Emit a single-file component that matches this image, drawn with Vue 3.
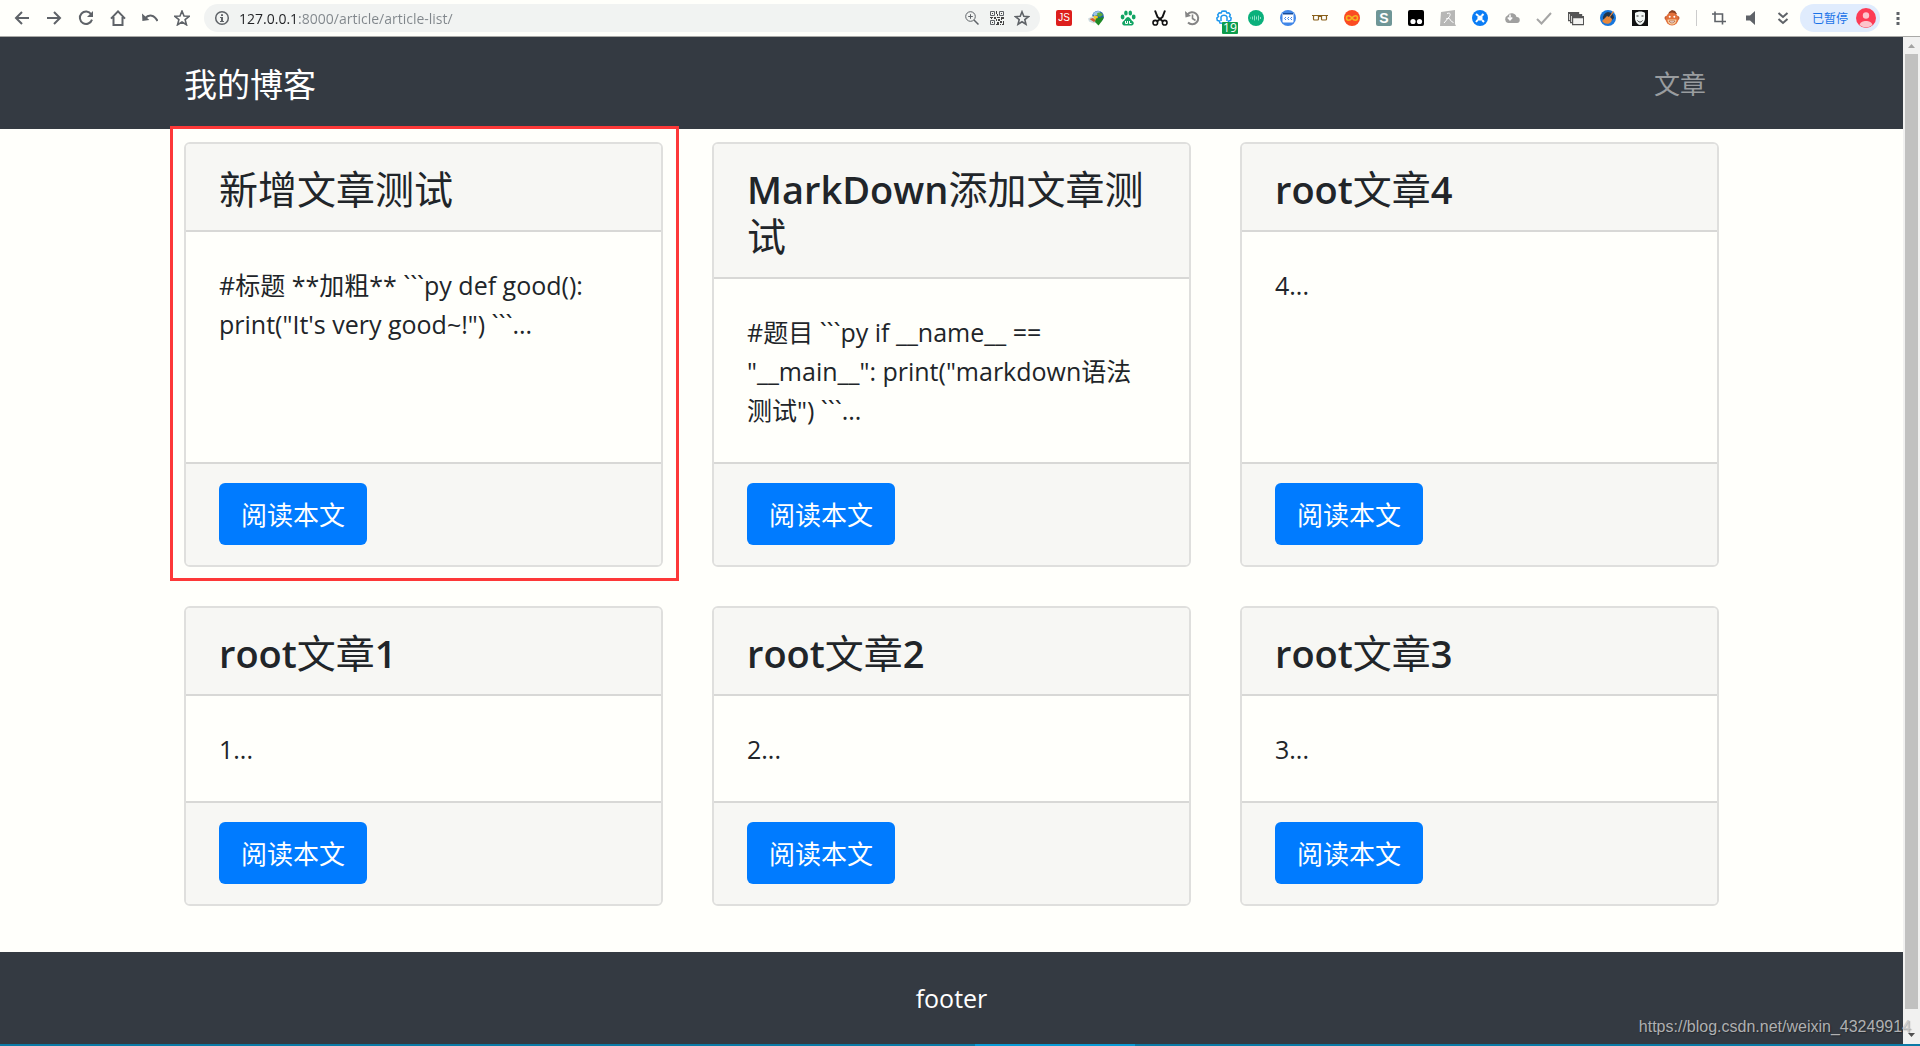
<script setup>
import { ref } from 'vue'

const url = ref('127.0.0.1:8000/article/article-list/')

// Splits a title so that its Latin and Chinese runs can carry different weights.
const runs = (text) =>
  text
    .split(/([\u4e00-\u9fff]+)/)
    .filter(Boolean)
    .map((value) => ({ value, han: /[\u4e00-\u9fff]/.test(value) }))

const articles = [
  { title: '新增文章测试', body: '#标题 **加粗** ```py def good(): print("It\'s very good~!") ```...', marked: true },
  { title: 'MarkDown添加文章测试', body: '#题目 ```py if __name__ == "__main__": print("markdown语法测试") ```...' },
  { title: 'root文章4', body: '4...' },
  { title: 'root文章1', body: '1...' },
  { title: 'root文章2', body: '2...' },
  { title: 'root文章3', body: '3...' },
]
</script>

<template>
  <div class="browser">
    <header class="toolbar">
      <div class="nav-buttons">
        <button aria-label="后退"><svg viewBox="0 0 16 16"><path class="line" d="M15 8H2M8 2L2 8l6 6" /></svg></button>
        <button aria-label="前进"><svg viewBox="0 0 16 16"><path class="line" d="M1 8h13M8 2l6 6-6 6" /></svg></button>
        <button aria-label="刷新"><svg viewBox="0 0 16 16"><path class="line" d="M13.2 4.2A6.2 6.2 0 1 0 14 9.6" /><path class="fill" d="M15 1v6H9z" /></svg></button>
        <button aria-label="主页"><svg viewBox="0 0 16 16"><path class="line" d="M1 8.6L8 1.4l7 7.2M3.5 7v8h9V7" /></svg></button>
        <button aria-label="撤销"><svg viewBox="0 0 16 16"><path class="line" d="M3 8.5C7 3.700 12.500 5 15.500 11" /><path class="fill" d="M0 3.500l.4 7.500 7-1z" /></svg></button>
        <button aria-label="收藏"><svg viewBox="0 0 16 16"><path class="star" d="M8 1l2 5 5.200.3-4.100 3.300 1.400 5.200L8 12l-4.500 2.800 1.400-5.200L.8 6.300 6 6z" /></svg></button>
      </div>

      <div class="address">
        <svg viewBox="0 0 16 16"><circle class="line" cx="8" cy="8" r="6.300" /><path class="fill" d="M7 4.300h2v1.700H7zM6 7h3v4h1v1H6v-1h1V8H6z" /></svg>
        <input v-model="url" aria-label="地址" spellcheck="false" />
        <button aria-label="缩放"><svg viewBox="0 0 16 16"><circle class="thin" cx="6.500" cy="6.500" r="4.800" /><path class="thin" d="M4.200 6.500h4.600M6.500 4.200v4.600" /><path class="line" d="M10 10l4.500 4.500" /></svg></button>
        <button aria-label="二维码">
          <svg viewBox="0 0 16 16">
            <path class="qr" d="M1.500 1.500h4v4h-4zM10.500 1.500h4v4h-4zM1.500 10.500h4v4h-4z" />
            <path class="dark" d="M3 3h1v1H3zM12 3h1v1h-1zM3 12h1v1H3zM7 1h1v3H7zM8 4h1v2H8zM1 7h3v1H1zM5 7h2v2H5zM8 7h3v1H8zM12 7h3v2h-2v1h-1zM7 9h1v2H7zM9 9h2v2H9zM8 12h2v3H8zM11 11h2v2h-2zM14 11h1v4h-2v-1h1zM7 14h1v1H7zM11 14h1v1h-1zM2 8h1v1H2z" />
          </svg>
        </button>
        <button aria-label="添加书签"><svg viewBox="0 0 16 16"><path class="star" d="M8 1.800l1.800 4.500 4.700.3-3.700 3 1.200 4.700L8 11.800l-4 2.500 1.200-4.700-3.700-3 4.700-.3z" /></svg></button>
      </div>

      <div class="extensions">
        <button aria-label="JS"><span class="js">JS</span></button>
        <button aria-label="下载管理器">
          <svg viewBox="0 0 16 16"><circle cx="10" cy="6.500" r="5.800" fill="#1b5fa8" /><path d="M5 4c1-2.500 5-4 8-2.500L10 5 6 6z" fill="#9cc3e6" /><path d="M9 3.500c2-2 5-1 6 1.500L12 7 9.500 6z" fill="#5cab3a" /><path d="M4.500 7c1.500-1.500 4-1.500 5.500-.5l-1 4-4-1z" fill="#efc928" /><path d="M0 8.500L5 6l2 4 3 1-4 2.500-5-2z" fill="#cfdde2" /><path d="M1.500 9l3.500-1 3 2.500-2 1.500z" fill="#cf5a33" /><path d="M8 8.500L16 7l-2 4-3.500 4.500L7 12z" fill="#1f8a24" /></svg>
        </button>
        <button aria-label="百度">
          <svg viewBox="0 0 16 16" fill="#12a564"><ellipse cx="2.600" cy="7" rx="1.900" ry="2.400" /><ellipse cx="5.900" cy="3" rx="1.800" ry="2.500" /><ellipse cx="10.300" cy="3" rx="1.800" ry="2.500" /><ellipse cx="13.700" cy="7" rx="1.900" ry="2.400" /><path d="M8 7c2 0 3 3 5 4.500 2 2-.2 4.500-2.500 4H5.500c-2.500.5-4.500-2-2.500-4C5 10 6 7 8 7z" /><path d="M5.500 11v2.500h2V11M9.500 11v2.500h2" fill="none" stroke="#fff" /></svg>
        </button>
        <button aria-label="剪刀">
          <svg viewBox="0 0 16 16"><path d="M3 .5l2.500 6.500 2.500 2M13 .5L10.500 7 8 9l-3 2.500M8 9l3 2.500" fill="none" stroke="#111" stroke-width="2" /><circle cx="3.300" cy="12.700" r="2.300" fill="none" stroke="#111" stroke-width="1.600" /><circle cx="12.700" cy="12.700" r="2.300" fill="none" stroke="#111" stroke-width="1.600" /></svg>
        </button>
        <button aria-label="历史">
          <svg viewBox="0 0 16 16"><path d="M3.500 4.500A6 6 0 1 1 4 12.500" fill="none" stroke="#858585" stroke-width="2" /><path d="M1 1l.5 6.500L7 6z" fill="#858585" /><path d="M8.500 4.500v4l3 2" fill="none" stroke="#858585" stroke-width="1.600" /></svg>
        </button>
        <button class="badged" aria-label="设置">
          <svg viewBox="0 0 16 16" fill="none" stroke="#1d97ee" stroke-width="1.500"><path d="M8 1l2 .3.800 1.700 2-.2 1.500 2-.8 1.700 1.700 1.500-.5 2.500-2 .5-.7 2-2.500.2L8 14l-1.500-.8-2.500-.2-.7-2-2-.5L.8 8l1.700-1.500-.8-1.700 1.500-2 2 .2.800-1.700z" /><path d="M5 11V7c1-2.500 5-2.500 6 0v4" /></svg>
          <span class="badge">19</span>
        </button>
        <button aria-label="音频">
          <svg viewBox="0 0 16 16"><circle cx="8" cy="8" r="8" fill="#0bb07b" /><path d="M2.500 7.500v1M4.500 6.500v3M6.500 5.500v5M8.500 6.500v3M10.500 5.500v5M12.500 7v2" stroke="#8fe0c5" /></svg>
        </button>
        <button aria-label="代码">
          <svg viewBox="0 0 16 16"><circle cx="8" cy="8" r="8" fill="#4087e8" /><rect x="2.500" y="3" width="11" height="9.500" rx="1" fill="#fff" /><rect x="3" y="3" width="10" height="1.500" fill="#174c9a" /><path d="M6 7L4.500 8.500 6 10M9 7L7.500 8.500 9 10M12 7l-1.500 1.500L12 10" fill="none" stroke="#4087e8" /></svg>
        </button>
        <button aria-label="眼镜">
          <svg viewBox="0 0 16 16" fill="none" stroke="#8a611c" stroke-width="1.200"><path d="M0 5.500h16M7 6.500h2" /><rect x="1.500" y="5.500" width="5" height="4.500" rx="1" /><rect x="9.500" y="5.500" width="5" height="4.500" rx="1" /></svg>
        </button>
        <button aria-label="无限">
          <svg viewBox="0 0 16 16"><circle cx="8" cy="8" r="8" fill="#fb4b22" /><path d="M8 8C6 5 2.500 5 2.500 8S6 11 8 8s5.500-3 5.500 0S10 11 8 8z" fill="none" stroke="#f5b51f" stroke-width="1.600" /></svg>
        </button>
        <button aria-label="S"><span class="s-mark">S</span></button>
        <button aria-label="脚本管理">
          <svg viewBox="0 0 16 16"><rect width="16" height="16" rx="2" fill="#000" /><circle cx="5" cy="11.500" r="2.600" fill="#fff" /><circle cx="11.500" cy="11.500" r="2.600" fill="#fff" /></svg>
        </button>
        <button aria-label="阅读">
          <svg viewBox="0 0 16 16"><path d="M1 2l14-2v14l1 2H0z" fill="#b7b7b5" /><path d="M7 3.500c3-1 4 0 2.500 3L4 13M8.500 8c1.500 0 2 4 5 4.500M6 9l3-1" fill="none" stroke="#fff" /></svg>
        </button>
        <button aria-label="同步">
          <svg viewBox="0 0 16 16"><circle cx="8" cy="8" r="8" fill="#0b7df5" /><path d="M4 4l2.500 2M11.500 4L9.500 6M4 12l2-2.500M12 12l-2-2" stroke="#fff" stroke-width="2" /><circle cx="8" cy="8" r="2.600" fill="#fff" /></svg>
        </button>
        <button aria-label="云下载">
          <svg viewBox="0 0 16 16"><path d="M4 13a4 4 0 0 1-.5-7.500 5 5 0 0 1 9 1.500A3 3 0 0 1 13 13z" fill="#a0a09f" /><path d="M6 4.500v5M3.800 7.500L6 9.800l2.200-2.300" fill="none" stroke="#fff" stroke-width="1.500" /></svg>
        </button>
        <button aria-label="检查"><svg viewBox="0 0 16 16"><path d="M1 9l4.500 4.500L15 3" fill="none" stroke="#a6a6a5" stroke-width="2" /></svg></button>
        <button aria-label="窗口">
          <svg viewBox="0 0 16 16" fill="#f4f4f2" stroke="#555" stroke-width="1.200"><path d="M.6 2.600h10v8h-10z" /><path d="M2.600 4.600h11v8h-11z" /><path d="M4.600 6.600h11v8h-11z" /><path d="M4.600 7.200h11M2.600 5h11M.6 3h10" stroke-width="2" /></svg>
        </button>
        <button aria-label="清理">
          <svg viewBox="0 0 16 16"><circle cx="8" cy="8" r="8" fill="#1877dc" /><path d="M8 2a6 6 0 0 1 6 6l-4 4-7-3a6 6 0 0 1 5-7z" fill="#24364b" /><path d="M13 1l1 1-4 5 2 2c0 4-4 6-8 4l-2-2 5-5 2 1z" fill="#e8873a" /></svg>
        </button>
        <button aria-label="面具">
          <svg viewBox="0 0 16 16"><path fill="#111" d="M0 0h16v16H0z" /><path d="M3 3c3-2 8-2 10 0v5c0 4-3 7-5 7s-5-3-5-7z" fill="#f2f7f5" /><path d="M4.500 6h2M9.500 6h2M5.500 10.500c1.500 2 3.500 2 5 0" stroke="#333" fill="none" /></svg>
        </button>
        <button aria-label="猴子">
          <svg viewBox="0 0 16 16"><circle cx="2.500" cy="8" r="2" fill="#b8512a" /><circle cx="13.500" cy="8" r="2" fill="#b8512a" /><path d="M5 2l3-2 3 1 2 3-9 1z" fill="#8c3f1f" /><circle cx="8" cy="9" r="6.500" fill="#e2703a" /><path d="M3.500 9.500h9c0 3-2 5-4.500 5s-4.500-2-4.500-5z" fill="#f8d2a2" /><path d="M5 11h6c-1 2.500-5 2.500-6 0z" fill="#fff" stroke="#a4492b" stroke-width=".7" /><circle cx="5.700" cy="6.800" r="1" fill="#fff" /><circle cx="10.300" cy="6.800" r="1" fill="#fff" /></svg>
        </button>
      </div>

      <div class="tools">
        <button aria-label="截图"><svg viewBox="0 0 16 16"><path class="crop" d="M1 4h10.500v8M4 1.500v10h11M11.500 11v3.500" /></svg></button>
        <button aria-label="声音"><svg viewBox="0 0 16 16"><path class="fill" d="M3 5.500h4L12 1v14L7 10.500H3z" /></svg></button>
        <button aria-label="更多扩展"><svg viewBox="0 0 16 16"><path class="line" d="M3.500 3L8 7l4.500-4M3.500 9L8 13l4.500-4" /></svg></button>
      </div>

      <button class="profile">
        已暂停
        <svg viewBox="0 0 20 20"><circle cx="10" cy="10" r="10" fill="#fd3c55" /><circle cx="10" cy="7.500" r="3.200" fill="#fdc4cc" /><path d="M3.500 17c1-5.500 12-5.500 13 0a10 10 0 0 1-13 0z" fill="#fdc4cc" /></svg>
      </button>
      <button class="menu" aria-label="菜单"><svg viewBox="0 0 16 16"><path class="fill" d="M6.500 2h3v3h-3zM6.500 7h3v3h-3zM6.500 12h3v3h-3z" /></svg></button>
    </header>

    <div class="viewport">
      <div class="page">
        <nav class="navbar">
          <div class="container navbar-inner">
            <a class="brand" href="#">我的博客</a>
            <a class="nav-link" href="#">文章</a>
          </div>
        </nav>

        <main class="container articles">
          <div v-for="a in articles" :key="a.title" class="cell">
            <article class="card">
              <h4 class="card-header"><span v-for="(r, i) in runs(a.title)" :key="i" :class="{ han: r.han }">{{ r.value }}</span></h4>
              <p class="card-body">{{ a.body }}</p>
              <div class="card-footer"><a class="btn" href="#">阅读本文</a></div>
            </article>
            <div v-if="a.marked" class="highlight"></div>
          </div>
        </main>

        <footer class="footer">footer</footer>
      </div>

      <div class="scrollbar" aria-hidden="true">
        <svg class="arrow up" viewBox="0 0 17 17"><path d="M5 11l3.500-4 3.500 4z" /></svg>
        <div class="thumb"></div>
        <svg class="arrow down" viewBox="0 0 17 17"><path d="M5 6l3.500 4L12 6z" /></svg>
      </div>
    </div>

    <div class="taskbar"><span class="active-task"></span></div>
    <div class="watermark">https://blog.csdn.net/weixin_43249914</div>
  </div>
</template>

<style>
body {
  background: #fffffb;
}
</style>

<style scoped>
* {
  box-sizing: border-box;
}

.browser {
  position: relative;
  display: flex;
  flex-direction: column;
  min-height: 100vh;
  overflow: hidden;
  color: #212529;
  font-family: "Open Sans", "Noto Sans CJK SC", sans-serif;
}

button {
  padding: 0;
  border: 0;
  background: none;
  font: inherit;
  color: inherit;
}

svg {
  display: block;
  flex: none;
  width: 16px;
  height: 16px;
}

.line,
.thin,
.crop,
.star,
.qr {
  fill: none;
  stroke: #5f6368;
  stroke-width: 2;
}

.thin,
.qr {
  stroke-width: 1;
}

.star,
.crop {
  stroke-width: 1.6;
}

.address .line {
  stroke-width: 1.5;
}

.fill {
  fill: #5f6368;
}

.dark {
  fill: #444;
}

/* Browser toolbar */
.toolbar {
  display: flex;
  align-items: center;
  height: 37px;
  padding: 0 14px;
  border-bottom: 1px solid #a9a9a6;
  background: #fffffb;
}

.nav-buttons {
  display: flex;
  gap: 16px;
}

.address {
  display: flex;
  flex: 1;
  align-items: center;
  gap: 9px;
  height: 28px;
  margin: 0 16px 0 14px;
  padding: 0 10px;
  border-radius: 14px;
  background: #f1f3f2;
}

.address input {
  flex: 1;
  min-width: 0;
  padding: 0;
  border: 0;
  outline: 0;
  background: linear-gradient(90deg, #202124 59px, #80868b 59px);
  background-clip: text;
  color: transparent;
  font: 14px "Open Sans", sans-serif;
}

.extensions {
  display: flex;
  gap: 16px;
}

.badged {
  position: relative;
}

.js,
.s-mark {
  display: block;
  width: 16px;
  height: 16px;
  border-radius: 2px;
  background: #dd1f1c;
  color: #fff;
  font: 10px/16px "Liberation Sans", sans-serif;
  text-align: center;
}

.s-mark {
  background: #6f9696;
  font-size: 14px;
  font-weight: 700;
}

.badge {
  position: absolute;
  top: 12px;
  left: 6px;
  width: 16px;
  height: 12px;
  border-radius: 1px;
  background: #0d9c4b;
  color: #fff;
  font: 12px/12px "Open Sans", sans-serif;
  text-align: center;
}

.tools {
  display: flex;
  gap: 16px;
  margin-left: 16px;
  padding-left: 14px;
  border-left: 1px solid #ccc;
}

.profile {
  display: flex;
  align-items: center;
  gap: 8px;
  height: 28px;
  margin: 0 10px 0 9px;
  padding: 0 4px 0 12px;
  border-radius: 14px;
  background: #e0ecfd;
  color: #1a73e8;
  font-size: 12px;
}

.profile svg {
  width: 20px;
  height: 20px;
}

/* Page */
.viewport {
  display: flex;
  flex: 1;
}

.page {
  display: flex;
  flex: 1;
  flex-direction: column;
  min-width: 0;
}

.container {
  width: 100%;
  max-width: 1535px;
  margin: 0 auto;
}

.navbar {
  background: #343a42;
}

.navbar-inner {
  display: flex;
  align-items: center;
  justify-content: space-between;
  height: 92px;
  padding-right: 13px;
}

a {
  text-decoration: none;
}

.brand {
  color: #fff;
  font-size: 33px;
}

.nav-link {
  color: #999c9f;
  font-size: 26px;
}

.articles {
  display: grid;
  flex: 1;
  grid-template-columns: repeat(3, minmax(0, 1fr));
  align-content: start;
  gap: 39px 49px;
  padding: 13px 0 46px;
}

.cell {
  position: relative;
  display: flex;
}

.card {
  display: flex;
  flex: 1;
  flex-direction: column;
  min-width: 0;
  border: 2px solid #dfdfdd;
  border-radius: 6px;
  overflow: hidden;
}

.card-header {
  margin: 0;
  padding: 22px 33px 17px;
  border-bottom: 2px solid #d8d8d6;
  background: #f7f7f4;
  font-size: 38px;
  font-weight: 600;
  line-height: 47px;
}

.card-header .han {
  font-size: 39px;
  font-weight: 400;
  line-height: 1;
}

.card-body {
  flex: 1;
  margin: 0;
  padding: 34px 33px 32px;
  font-size: 25px;
  line-height: 39px;
}

.card-footer {
  display: flex;
  padding: 19px 33px 20px;
  border-top: 2px solid #d8d8d6;
  background: #f7f7f4;
}

.btn {
  padding: 12px 22px 10px;
  border-radius: 6px;
  background: #007bff;
  color: #fff;
  font-size: 26px;
  line-height: 40px;
}

.highlight {
  position: absolute;
  inset: -16px -16px -14px -14px;
  border: 3px solid #fd3838;
  pointer-events: none;
}

.footer {
  padding: 27px 0 26px;
  background: #343a42;
  color: #fff;
  font-size: 25px;
  line-height: 39px;
  text-align: center;
}

.scrollbar {
  display: flex;
  flex-direction: column;
  align-items: center;
  width: 17px;
  background: #f1f1f0;
}

.arrow {
  width: 17px;
  height: 17px;
  fill: #a3a3a2;
}

.arrow.down {
  fill: #505050;
}

.thumb {
  flex: 1;
  width: 13px;
  margin-bottom: 18px;
  background: #c1c1c0;
}

.taskbar {
  height: 2px;
  background: #0b7aa6;
}

.active-task {
  display: block;
  width: 160px;
  height: 2px;
  margin-left: 975px;
  background: #0a9bd6;
}

.watermark {
  position: absolute;
  right: 9px;
  bottom: 10px;
  color: rgba(200, 200, 200, 0.85);
  font: 16px/18px "Liberation Sans", sans-serif;
  text-shadow: 1px 1px 1px rgba(0, 0, 0, 0.3);
}
</style>
